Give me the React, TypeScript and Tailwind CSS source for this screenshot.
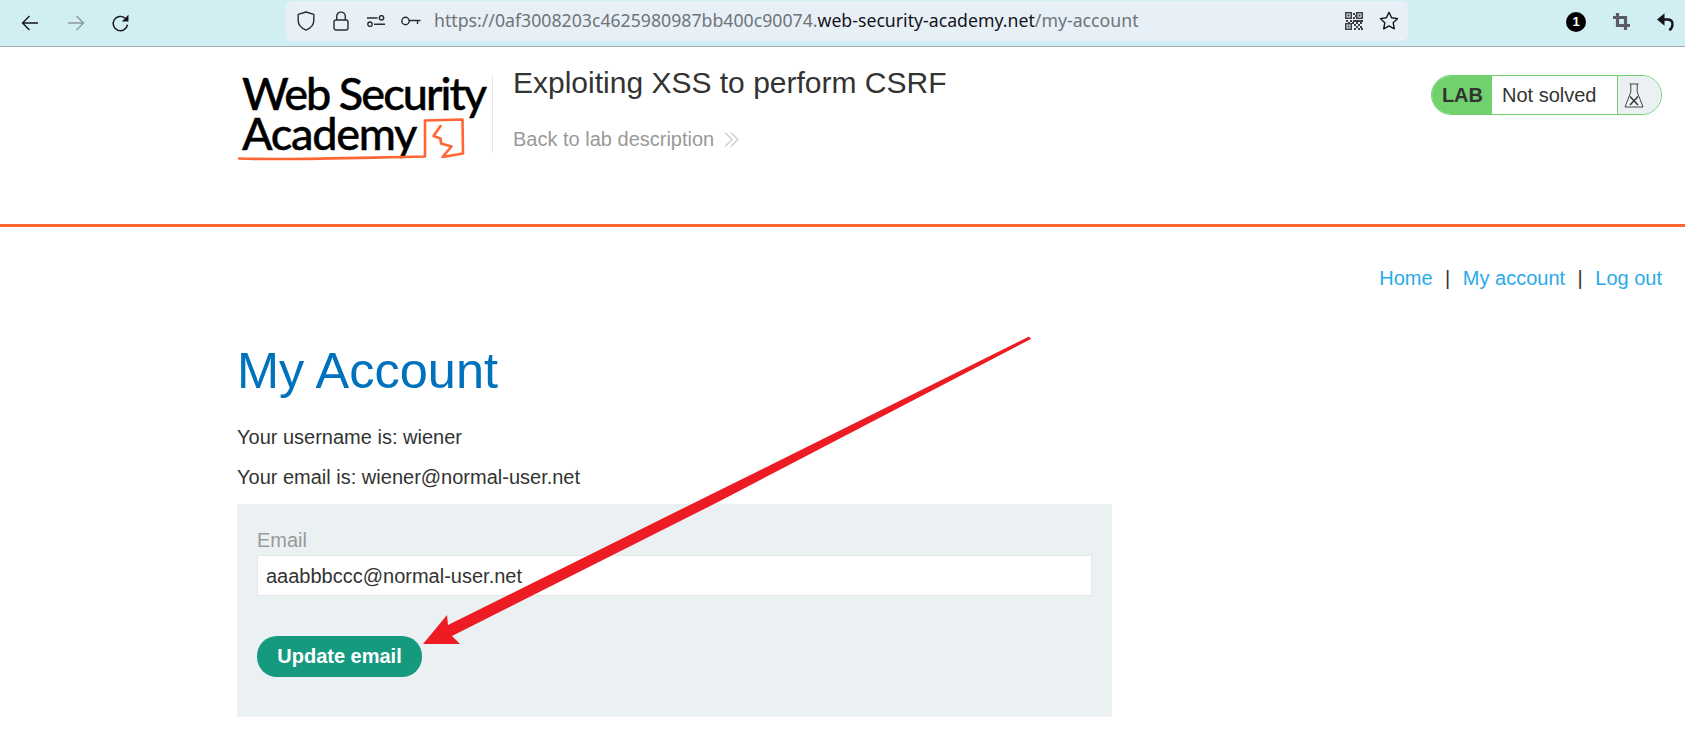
const sans = "font-['Liberation_Sans',Arial,sans-serif]";

function BackIcon({ className }: { className: string }) {
  return (
    <svg width="18" height="16" viewBox="0 0 18 16" fill="none" stroke="currentColor" strokeWidth="1.4" className={className}>
      <path d="M17 8H1.5M8.5 1 1.5 8l7 7" />
    </svg>
  );
}

function ForwardIcon({ className }: { className: string }) {
  return (
    <svg width="18" height="16" viewBox="0 0 18 16" fill="none" stroke="currentColor" strokeWidth="1.4" className={className}>
      <path d="M1 8h15.5M9.5 1l7 7-7 7" />
    </svg>
  );
}

function ReloadIcon() {
  return (
    <svg width="19" height="19" viewBox="0 0 18 18" fill="none" className="text-[#15141a]">
      <path d="M15.6 10a6.8 6.8 0 1 1-2.2-6" stroke="currentColor" strokeWidth="1.4" />
      <path d="M16.5.8v6.4h-6.2z" fill="currentColor" />
    </svg>
  );
}

function ShieldIcon() {
  return (
    <svg width="18" height="20" viewBox="0 0 18 20" fill="none" stroke="#2b2a33" strokeWidth="1.4">
      <path d="M9 1 1.200 3.400v6.400c0 4 3.400 7.400 7.800 9.400 4.400-2 7.800-5.400 7.800-9.400V3.400z" strokeLinejoin="round" />
    </svg>
  );
}

function LockIcon() {
  return (
    <svg width="16" height="20" viewBox="0 0 16 20" fill="none" stroke="#2b2a33" strokeWidth="1.4">
      <rect x="1" y="9" width="14" height="10" rx="2" />
      <path d="M3.700 9V5.400a4.300 4.300 0 0 1 8.600 0V9" />
    </svg>
  );
}

function PermissionsIcon() {
  return (
    <svg width="18" height="12" viewBox="0 0 18 12" fill="none" stroke="#2b2a33" strokeWidth="1.4">
      <path d="M0 3h10.500M7 9.200h11" />
      <circle cx="14.500" cy="2.800" r="2.200" />
      <circle cx="3" cy="9.200" r="2.200" />
    </svg>
  );
}

function KeyIcon() {
  return (
    <svg width="20" height="10" viewBox="0 0 20 10" fill="none" stroke="#2b2a33" strokeWidth="1.4">
      <circle cx="4.500" cy="5" r="3.700" />
      <path d="M8 4.500h11.500M16.500 4.500v3.500" />
    </svg>
  );
}

function QrIcon() {
  const cells = [
    [8, 1], [10, 3], [8, 5], [1, 8], [5, 8], [8, 8], [10, 8], [12, 8], [14, 8], [16, 8], [3, 10], [7, 10], [11, 10], [15, 10],
    [9, 12], [13, 12], [11, 14], [15, 14], [9, 16], [13, 16], [16, 16],
  ];
  return (
    <svg width="18" height="18" viewBox="0 0 18 18" fill="#3d3d44">
      <path fillRule="evenodd" d="M0 0h7v7H0zM1.500 1.500v4h4v-4zM11 0h7v7h-7zM12.500 1.500v4h4v-4zM0 11h7v7H0zM1.500 12.500v4h4v-4z" />
      <rect x="2.500" y="2.500" width="2" height="2" />
      <rect x="13.500" y="2.500" width="2" height="2" />
      <rect x="2.500" y="13.500" width="2" height="2" />
      {cells.map(([x, y]) => (
        <rect key={`${x}-${y}`} x={x} y={y} width="2" height="2" />
      ))}
    </svg>
  );
}

function StarIcon() {
  return (
    <svg width="20" height="19" viewBox="0 0 20 19" fill="none" stroke="#15141a" strokeWidth="1.4" strokeLinejoin="round">
      <path d="M10 1.300 12.600 6.800l6 .8-4.400 4.200 1.100 6-5.300-2.900-5.300 2.900 1.100-6L1.400 7.600l6-.8z" />
    </svg>
  );
}

function CropIcon() {
  return (
    <svg width="17" height="17" viewBox="0 0 17 17" fill="none" stroke="#5b5b66" strokeWidth="3.200">
      <path d="M4.500 0v12.500H17M0 4.500h12.500V17" />
    </svg>
  );
}

function UndoIcon() {
  return (
    <svg width="17" height="18" viewBox="0 0 17 18" fill="none">
      <path d="M4 6.500h6.500c3.200 0 5 2 5 4.700 0 2.300-1 4.400-3.200 6" stroke="#15141a" strokeWidth="2.400" />
      <path d="M7.500.3v12.500L0 6.500z" fill="#15141a" />
    </svg>
  );
}

function FlaskIcon() {
  return (
    <svg width="20" height="25" viewBox="0 0 20 25" fill="none" stroke="#333" strokeWidth="0.9">
      <path d="M5.500 1h9M6.800 1v8L1 24h18L13.200 9V1" />
      <path d="M6 13.500 14 22M14 13.500 6 22" strokeWidth="1.400" />
    </svg>
  );
}

function Logo() {
  return (
    <div className="relative w-[250px] h-[90px] shrink-0 font-['Lato',sans-serif] font-medium text-black text-[45px] leading-[40px] [-webkit-text-stroke:0.4px_#000] whitespace-nowrap">
      <div className="pl-[4px] -mt-[2px] tracking-[-1.950px]">Web Security</div>
      <div className="pl-[4px] tracking-[-1.300px]">Academy</div>
      <svg width="250" height="90" viewBox="0 0 250 90" fill="none" stroke="#ff6633" strokeWidth="2.600" strokeLinejoin="round" strokeLinecap="round" className="absolute left-0 top-0">
        <path d="M1 83.500c50 1.800 110-.5 186-2V45.500l37.500-1 .5 34-20.500 3.500 9-10.500-10.500-3-.5-5-7-2.500 7-10" />
      </svg>
    </div>
  );
}

function ArrowOverlay() {
  return (
    <svg width="1685" height="745" viewBox="0 0 1685 745" className="absolute left-0 top-0 pointer-events-none">
      <polygon points="423,644 447,615 448,625 720,490 1029,336.500 1031,339 720,501 452,636 460,644" fill="#ed1c24" />
    </svg>
  );
}

export default function App() {
  return (
    <div className={`relative w-[1685px] h-[745px] overflow-hidden bg-white ${sans}`}>
      {/* browser chrome */}
      <div className="h-[47px] flex items-center bg-[#d1eff3] border-b border-[#a3adb0]">
        <div className="w-[286px] flex items-center pl-[21px] gap-[28px]">
          <BackIcon className="text-[#15141a]" />
          <ForwardIcon className="text-[#8f9a9c]" />
          <div className="-ml-[2px]"><ReloadIcon /></div>
        </div>
        <div className="w-[1122px] h-[40px] -mt-[5px] bg-[#e8f0f7] rounded-[6px] flex items-center pl-[11px] pr-[9px]">
          <div className="flex items-center gap-[18px] mr-[13px]">
            <ShieldIcon />
            <LockIcon />
            <PermissionsIcon />
            <div className="-ml-[2px]"><KeyIcon /></div>
          </div>
          <div className="flex-1 font-['Noto_Sans',sans-serif] text-[17.700px] text-[#6f7478] whitespace-nowrap">
            https://0af3008203c4625980987bb400c90074.<span className="text-[#15141a]">web-security-academy.net</span>/my-account
          </div>
          <div className="flex items-center gap-[16px]">
            <QrIcon />
            <StarIcon />
          </div>
        </div>
        <div className="flex-1 flex items-center justify-end pr-[11px] gap-[27px] -mt-[3px]">
          <div className="w-[20px] h-[20px] rounded-full bg-black text-white text-[13px] font-bold flex items-center justify-center">1</div>
          <CropIcon />
          <UndoIcon />
        </div>
      </div>

      {/* lab header */}
      <div className="h-[180px] border-b-[3px] border-[#ff6633] flex pl-[238px] pr-[23px] pt-[28px]">
        <Logo />
        <div className="ml-[4px] h-[78px] border-l border-[#e6e6e6] pl-[20px]">
          <h2 className="text-[30px] leading-[36px] -mt-[10.500px] text-[#333332]">Exploiting XSS to perform CSRF</h2>
          <div className="mt-[24.500px] flex items-center text-[20px] leading-[28px] text-[#999]">
            Back to lab description
            <svg width="15" height="15" viewBox="0 0 15 15" fill="none" stroke="#999" strokeWidth="0.9" className="ml-[10px]">
              <path d="M1 .5 8 7.500 1 14.500M7 .5l7 7-7 7" />
            </svg>
          </div>
        </div>
        <div className="ml-auto w-[231px] h-[40px] flex rounded-[20px] border border-[#70d16d] overflow-hidden">
          <div className="w-[60px] bg-[#70d16d] text-[#333332] text-[20px] font-bold flex items-center justify-end pr-[9px]">LAB</div>
          <div className="flex-1 text-[#333332] text-[20px] flex items-center pl-[10px]">Not solved</div>
          <div className="w-[44px] bg-[#ebf0f2] border-l border-[#70d16d] flex items-center pl-[6px]"><FlaskIcon /></div>
        </div>
      </div>

      {/* top links */}
      <div className="mt-[37px] pr-[23px] flex justify-end text-[20px] leading-[28px] text-[#2aaaea]">
        <span>Home</span>
        <span className="mx-[12.500px] text-[#333332]">|</span>
        <span>My account</span>
        <span className="mx-[12.500px] text-[#333332]">|</span>
        <span>Log out</span>
      </div>

      {/* account */}
      <div className="pl-[237px] mt-[47px]">
        <h1 className="text-[50.500px] leading-[64px] text-[#0071bc]">My Account</h1>
        <p className="mt-[22px] text-[20px] leading-[24px] text-[#333332]">Your username is: wiener</p>
        <p className="mt-[16px] text-[20px] leading-[24px] text-[#333332]">Your email is: wiener@normal-user.net</p>
        <div className="mt-[15px] w-[875px] h-[213px] bg-[#ebf0f2] px-[20px] pt-[23px]">
          <label className="block text-[20px] leading-[26px] text-[#999]">Email</label>
          <div className="h-[41px] mt-[2px] bg-white border border-[#e6e6e6] flex items-center pl-[8px] text-[20px] text-[#333332]">aaabbbccc@normal-user.net</div>
          <button className="mt-[40px] w-[165px] h-[41px] rounded-[20px] bg-[#159a80] text-white text-[20px] font-bold pb-[1px]">Update email</button>
        </div>
      </div>

      <ArrowOverlay />
    </div>
  );
}
